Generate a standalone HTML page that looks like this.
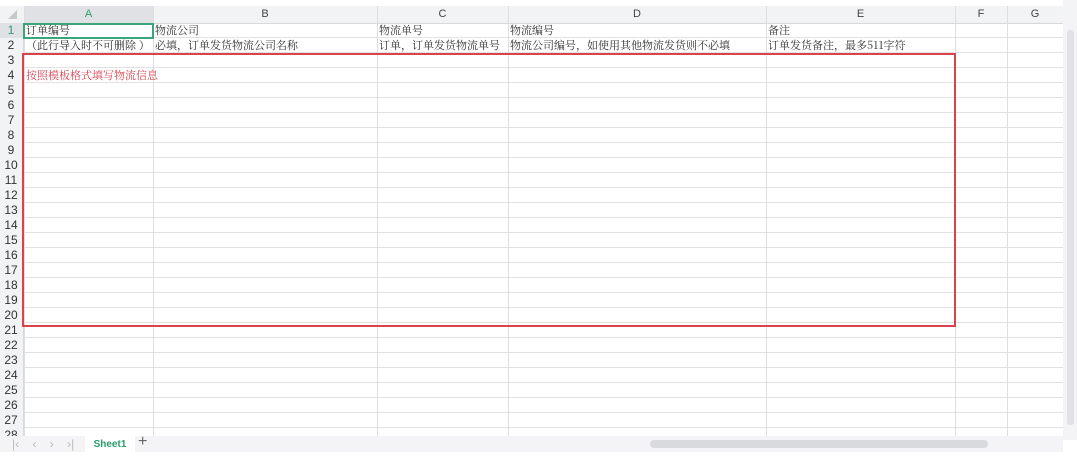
<!DOCTYPE html>
<html><head><meta charset="utf-8"><style>
body{margin:0;width:1077px;height:456px;background:#fff;overflow:hidden;position:relative;font-family:"Liberation Sans","Noto Sans CJK SC",sans-serif}
.a{position:absolute}
#hdr{left:0;top:6px;width:1063px;height:17px;background:#f2f3f5;border-bottom:1px solid #d8d8d8}
#grid{left:24px;top:23px;width:1039px;height:413px;background:repeating-linear-gradient(to bottom,transparent 0 14px,#e2e2e2 14px 15px)}
#rn{left:0;top:23px;width:24px;height:413px;background:#f2f3f5;border-right:1px solid #d8d8d8;box-sizing:border-box}
.vl{position:absolute;top:6px;width:1px;height:430px;background:#dedede}
.ch{position:absolute;top:6px;height:17px;line-height:17px;text-align:center;font-size:11px;color:#444}
.r{position:absolute;left:0;width:22px;text-align:center;font-size:12px;color:#333;height:15px;line-height:15px}
.t{position:absolute;font-family:"Noto Serif CJK SC","Liberation Serif",serif;font-size:11px;color:#333;line-height:15px;white-space:nowrap;overflow:hidden}
.rb{position:absolute;background:#d9434e}
</style></head><body>
<div class="a" id="hdr"></div>
<div class="a" style="left:24px;top:6px;width:129px;height:17px;background:#dfe1e5"></div>
<div class="a" id="rn"></div>
<div class="a" style="left:0;top:23px;width:23px;height:15px;background:#dfe1e5"></div>
<div class="a" id="grid"></div>
<div id="cols"></div>
<div class="a" style="width:0;height:0;border-left:9px solid transparent;border-bottom:9px solid #c8c8c8;left:8px;top:10px"></div>
<div class="ch" style="left:24px;width:129px;color:#2a9d6a">A</div>
<div class="ch" style="left:153px;width:224px">B</div>
<div class="ch" style="left:377px;width:131px">C</div>
<div class="ch" style="left:508px;width:258px">D</div>
<div class="ch" style="left:766px;width:189px">E</div>
<div class="ch" style="left:955px;width:52px">F</div>
<div class="ch" style="left:1007px;width:56px">G</div>
<div id="rows"></div>
<div class="t" style="left:26px;top:23px;width:126px">订单编号</div>
<div class="t" style="left:155px;top:23px">物流公司</div>
<div class="t" style="left:379px;top:23px">物流单号</div>
<div class="t" style="left:510px;top:23px">物流编号</div>
<div class="t" style="left:768px;top:23px">备注</div>
<div class="t" style="left:26px;top:38px;width:127px">（此行导入时不可删除 ）</div>
<div class="t" style="left:155px;top:38px">必填，订单发货物流公司名称</div>
<div class="t" style="left:379px;top:38px;width:129px">订单，订单发货物流单号</div>
<div class="t" style="left:510px;top:38px">物流公司编号，如使用其他物流发货则不必填</div>
<div class="t" style="left:768px;top:38px">订单发货备注，最多511字符</div>
<div class="t" style="left:26px;top:68px;color:#d9434e">按照模板格式填写物流信息</div>
<div class="a" style="left:23px;top:23px;width:127px;height:12px;border:2px solid #3aa57a"></div>
<div class="rb" style="left:22px;top:53px;width:934px;height:2px"></div>
<div class="rb" style="left:22px;top:325px;width:934px;height:2px"></div>
<div class="rb" style="left:22px;top:53px;width:2px;height:274px"></div>
<div class="rb" style="left:954px;top:53px;width:2px;height:274px"></div>
<div class="a" style="left:1063px;top:0;width:14px;height:440px;background:#f4f4f6"></div>
<div class="a" style="left:1067px;top:30px;width:7px;height:395px;background:#e1e2e6;border-radius:3px"></div>
<div class="a" style="left:0;top:436px;width:1063px;height:16px;background:#f4f4f6"></div>
<div class="a" style="left:12px;top:436px;font-size:12px;line-height:16px;color:#bbb;word-spacing:10px">|&lsaquo; &lsaquo; &rsaquo; &rsaquo;|</div>
<div class="a" style="left:85px;top:436px;width:50px;height:16px;background:#fff;font-size:10px;font-weight:bold;color:#2a9d6a;text-align:center;line-height:17px">Sheet1</div>
<div class="a" style="left:138px;top:433px;font-size:16px;color:#666">+</div>
<div class="a" style="left:650px;top:440px;width:338px;height:8px;background:#d8dade;border-radius:4px"></div>
<script>
var c=document.getElementById('cols'),h='';
[24,153,377,508,766,955,1007,1063].forEach(function(x){h+='<div class="vl" style="left:'+x+'px"></div>'});c.innerHTML=h;
var r=document.getElementById('rows');h='';
for(var i=1;i<=28;i++){h+='<div class="r" style="top:'+(23+(i-1)*15)+'px'+(i==1?';color:#2a9d6a':'')+'">'+i+'</div>'}r.innerHTML=h;
</script>
</body></html>
